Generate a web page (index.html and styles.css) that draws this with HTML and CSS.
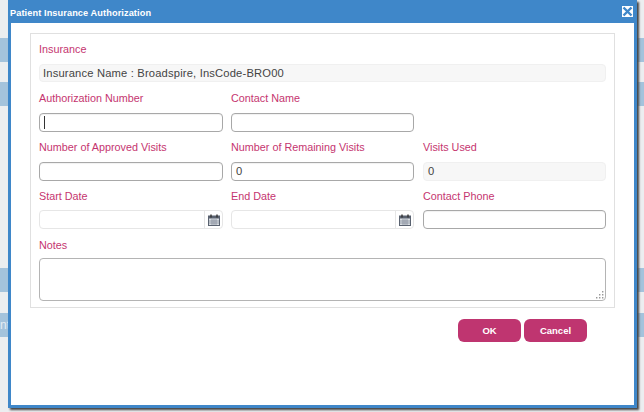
FILE: index.html
```html
<!DOCTYPE html>
<html lang="en">
<head>
<meta charset="utf-8">
<title>Patient Insurance Authorization</title>
<link rel="stylesheet" href="styles.css">
</head>
<body>
<div class="backdrop">
  <div class="strip strip-a"></div>
  <div class="strip strip-b"></div>
  <div class="strip strip-c"></div>
  <div class="strip strip-d">nt</div>
</div>
<div class="modal">
  <header class="titlebar">
    <span class="title">Patient Insurance Authorization</span>
    <button class="close" aria-label="Close">
      <svg width="11" height="11" viewBox="0 0 11 11"><path d="M1.5 1.5l8 8M9.5 1.5l-8 8" stroke="#3f87c9" stroke-width="2.4" fill="none"/></svg>
    </button>
  </header>
  <div class="body">
    <form class="panel">
      <div class="field">
        <label>Insurance</label>
        <div class="readonly wide">Insurance Name : Broadspire, InsCode-BRO00</div>
      </div>
      <div class="grid">
        <div class="field"><label>Authorization Number</label><div class="input"><span class="caret"></span></div></div>
        <div class="field"><label>Contact Name</label><div class="input"></div></div>
        <div class="field col3"></div>
        <div class="field"><label>Number of Approved Visits</label><div class="input"></div></div>
        <div class="field"><label>Number of Remaining Visits</label><div class="input">0</div></div>
        <div class="field col3"><label>Visits Used</label><div class="readonly">0</div></div>
        <div class="field"><label>Start Date</label>
          <div class="date"><div class="date-text"></div><div class="date-btn">
            <svg width="12" height="12" viewBox="0 0 12 12"><rect x="0.5" y="2" width="11" height="9.5" fill="#d9dde2" stroke="#5a6270"/><rect x="0.5" y="2" width="11" height="2.5" fill="#5a6270"/><path d="M3 0.5v3M9 0.5v3" stroke="#333" stroke-width="1.4"/><path d="M4 5v6M6 5v6M8 5v6M1 7h10M1 9h10" stroke="#7b8494" stroke-width="0.7"/></svg>
          </div></div>
        </div>
        <div class="field"><label>End Date</label>
          <div class="date"><div class="date-text"></div><div class="date-btn">
            <svg width="12" height="12" viewBox="0 0 12 12"><rect x="0.5" y="2" width="11" height="9.5" fill="#d9dde2" stroke="#5a6270"/><rect x="0.5" y="2" width="11" height="2.5" fill="#5a6270"/><path d="M3 0.5v3M9 0.5v3" stroke="#333" stroke-width="1.4"/><path d="M4 5v6M6 5v6M8 5v6M1 7h10M1 9h10" stroke="#7b8494" stroke-width="0.7"/></svg>
          </div></div>
        </div>
        <div class="field col3 phone"><label>Contact Phone</label><div class="input"></div></div>
      </div>
      <div class="field">
        <label>Notes</label>
        <div class="textarea">
          <svg class="grip" width="8" height="8" viewBox="0 0 8 8"><path d="M6 0h1.4v1.4H6zM3 3h1.4v1.4H3zM6 3h1.4v1.4H6zM0 6h1.4v1.4H0zM3 6h1.4v1.4H3zM6 6h1.4v1.4H6z" fill="#999"/></svg>
        </div>
      </div>
    </form>
    <div class="actions">
      <button class="btn" type="button">OK</button>
      <button class="btn" type="button">Cancel</button>
    </div>
  </div>
</div>
</body>
</html>
```
FILE: styles.css
```css
* { box-sizing: border-box; }
html, body { margin: 0; padding: 0; }
body {
  width: 644px;
  height: 412px;
  overflow: hidden;
  position: relative;
  background: #eceef0;
  font-family: "Liberation Sans", Arial, sans-serif;
}
.backdrop {
  width: 644px;
  height: 412px;
  display: flex;
  flex-direction: column;
  padding-top: 38px;
}
.strip {
  height: 24px;
  background: #a4c3dc;
  flex: none;
  color: #e4edf4;
  font-size: 12px;
  line-height: 24px;
}
.strip-b { margin-top: 20px; }
.strip-c { margin-top: 162px; }
.strip-d { margin-top: 21px; }
.modal {
  position: absolute;
  left: 8px;
  top: 0;
  width: 629px;
  height: 408px;
  background: #fff;
  border: 3px solid #3f87c9;
  border-top: 0;
  box-shadow: 2px 2px 2px #444;
  display: flex;
  flex-direction: column;
}
.titlebar {
  height: 23px;
  flex: none;
  background: #3f87c9;
  display: flex;
  align-items: center;
  justify-content: space-between;
  padding: 0 1px 0 0;
}
.title {
  color: #fff;
  font-size: 9.2px;
  font-weight: bold;
  letter-spacing: 0.1px;
  margin: 3px 0 0 -1px;
}
.close {
  width: 11px;
  height: 11px;
  padding: 0;
  border: 0;
  background: #fff;
  display: flex;
}
.body {
  flex: 1;
  padding: 10px 19px 0 19px;
  display: flex;
  flex-direction: column;
}
.panel {
  height: 275px;
  border: 1px solid #e0e0e0;
  padding: 8px 8px 0 8px;
}
.grid {
  display: grid;
  grid-template-columns: 184px 183px 184px;
  column-gap: 8px;
}
.col3 { margin-left: 1px; }
.field {
  height: 49px;
  display: flex;
  flex-direction: column;
}
label {
  height: 14px;
  line-height: 14px;
  font-size: 10.8px;
  color: #c5356f;
  flex: none;
}
.input, .readonly, .date {
  margin-top: 8px;
  height: 19px;
  border-radius: 4px;
  font-size: 11.2px;
  line-height: 17px;
  color: #444;
  padding: 0 4px;
}
.input {
  border: 1px solid #a8a8a8;
  background: #fff;
  box-shadow: inset 0 1px 1px rgba(0,0,0,.06);
}
.readonly {
  background: #f7f7f7;
  border: 1px solid #f0f0f0;
}
.readonly.wide {
  height: 18px;
  line-height: 16px;
  padding: 0 3px;
  letter-spacing: 0.17px;
}
.caret {
  display: block;
  width: 1px;
  height: 13px;
  margin-top: 2px;
  background: #333;
}
.date {
  margin-top: 7px;
  border: 1px solid #e6e6e6;
  padding: 0;
  display: flex;
}
.phone .input { margin-top: 7px; }
.date-text { flex: 1; }
.date-btn {
  width: 18px;
  border-left: 1px solid #e6e6e6;
  padding-left: 1px;
  display: flex;
  align-items: center;
  justify-content: center;
}
.textarea {
  margin-top: 6px;
  height: 43px;
  flex: none;
  border: 1px solid #b4b4b4;
  border-radius: 4px;
  position: relative;
}
.grip { position: absolute; right: 1px; bottom: 1px; }
.actions {
  display: flex;
  justify-content: flex-end;
  gap: 3px;
  margin-top: 11px;
  padding-right: 28px;
}
.btn {
  width: 63px;
  height: 23px;
  border: 0;
  border-radius: 6px;
  background: #bf3570;
  color: #fff;
  font: bold 9.5px "Liberation Sans", Arial, sans-serif;
  padding: 0;
}
```
